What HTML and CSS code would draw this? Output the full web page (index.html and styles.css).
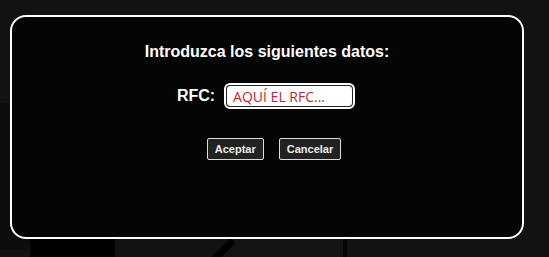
FILE: index.html
```html
<!DOCTYPE html>
<html lang="es">
<head>
    <meta charset="UTF-8">
    <meta name="viewport" content="width=device-width, initial-scale=1.0">
    <title>Introduzca los datos</title>
    <link rel="stylesheet" href="styles.css">
</head>
<body>
    <!-- fondo de la pagina -->
    <div class="fondo">
        <div class="bloque-borde"></div>
        <div class="bloque-izq"></div>
        <div class="bloque-centro"></div>
        <div class="trazo"></div>
    </div>

    <!-- ventana modal -->
    <div class="overlay">
        <div class="modal">
            <h2>Introduzca los siguientes datos:</h2>
            <div class="campo">
                <label for="rfc">RFC:</label>
                <input type="text" id="rfc" placeholder="AQUÍ EL RFC...">
            </div>
            <div class="botones">
                <button>Aceptar</button>
                <button>Cancelar</button>
            </div>
        </div>
    </div>
</body>
</html>
```

FILE: styles.css
```css
body {
    font-family: "Liberation Sans", Arial, sans-serif;
    background-color: #121212;
    color: #fff;
    margin: 0;
    padding: 0;
    width: 549px;
    height: 257px;
    overflow: hidden;
}
.fondo {
    position: relative;
    width: 549px;
    height: 257px;
    overflow: hidden;
}
.bloque-borde {
    position: absolute;
    left: 0;
    top: 103px;
    width: 30px;
    height: 147px;
    background: #0c0c0c;
    border-radius: 0 0 8px 0;
}
.bloque-izq {
    position: absolute;
    left: 30px;
    top: 103px;
    width: 85px;
    height: 154px;
    background: #000;
}
.bloque-centro {
    position: absolute;
    left: 232px;
    top: 203px;
    width: 111px;
    height: 70px;
    border-right: 4px solid #050505;
    border-top: 3px solid #050505;
    border-radius: 6px 6px 0 0;
    background: #141414;
}
.trazo {
    position: absolute;
    left: 218px;
    top: 236px;
    width: 7px;
    height: 32px;
    background: #000;
    transform: rotate(45deg);
}
.overlay {
    position: absolute;
    top: 0;
    left: 0;
    width: 549px;
    height: 257px;
    padding: 15px 0 0 10px;
    box-sizing: border-box;
}
.modal {
    width: 514px;
    height: 224px;
    box-sizing: border-box;
    border: 2px solid #fff;
    border-radius: 16px;
    background: rgba(5, 5, 5, 0.96);
    text-align: center;
    padding-top: 26px;
}
h2 {
    font-size: 16px;
    font-weight: bold;
    margin: 0;
    line-height: 18px;
}
.campo {
    display: flex;
    justify-content: center;
    align-items: center;
    gap: 11px;
    margin-top: 24px;
    margin-left: -4px;
}
label {
    font-size: 16px;
    font-weight: bold;
}
input {
    width: 127px;
    height: 22px;
    box-sizing: border-box;
    border: 1px solid #222;
    outline: 2px solid #fff;
    border-radius: 4px;
    background: #fff;
    padding: 0 6px;
    font-family: "Open Sans", sans-serif;
    font-size: 14px;
}
input::placeholder {
    color: #c0262f;
}
.botones {
    display: flex;
    justify-content: center;
    gap: 15px;
    margin-top: 31px;
    margin-left: 14px;
}
button {
    background-color: #222;
    color: #eee;
    border: 1px solid #ddd;
    border-radius: 2px;
    font-family: "Liberation Sans", Arial, sans-serif;
    font-size: 11px;
    font-weight: bold;
    height: 22px;
    padding: 0 7px;
    cursor: pointer;
}
```
